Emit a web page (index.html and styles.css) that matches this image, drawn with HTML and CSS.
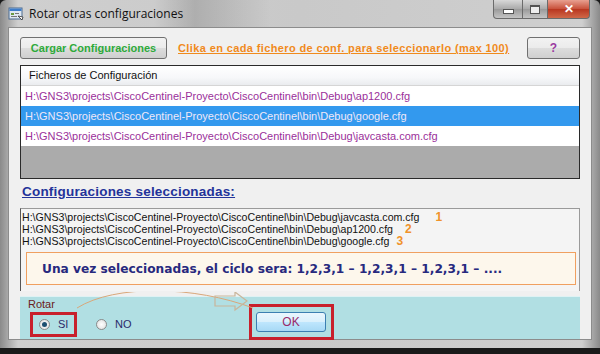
FILE: index.html
```html
<!DOCTYPE html>
<html>
<head>
  <title>Rotar otras configuraciones</title>
  <link rel="stylesheet" href="styles.css">
</head>
<body>
  <div class="window">
    <div class="titlebar">
      <svg class="app-icon" width="16" height="16" viewBox="0 0 16 16">
        <rect x="1" y="2" width="13" height="11" fill="#dfe8f2" stroke="#4a6a90"/>
        <rect x="1.5" y="2.5" width="12" height="2.5" fill="#3d7cc9"/>
        <rect x="3" y="7" width="3" height="2" fill="#6a9a40"/>
        <rect x="7" y="7" width="4" height="1" fill="#777"/>
        <rect x="3" y="10" width="6" height="1" fill="#777"/>
        <path d="M10 10 l4 4 l1 -3 z" fill="#fff" stroke="#333" stroke-width="0.8"/>
      </svg>
      <span class="title">Rotar otras configuraciones</span>
      <div class="controls">
        <span class="ctl min"><i></i></span>
        <span class="ctl max"><i></i></span>
        <span class="ctl close">&#x2715;</span>
      </div>
    </div>

    <div class="client">
      <div class="toolbar">
        <button class="btn load">Cargar Configuraciones</button>
        <a class="hint">Clika en cada fichero de conf. para seleccionarlo (max 100)</a>
        <button class="btn help">?</button>
      </div>

      <div class="listview">
        <div class="lv-head">Ficheros de Configuración</div>
        <div class="lv-row">H:\GNS3\projects\CiscoCentinel-Proyecto\CiscoCentinel\bin\Debug\ap1200.cfg</div>
        <div class="lv-row selected">H:\GNS3\projects\CiscoCentinel-Proyecto\CiscoCentinel\bin\Debug\google.cfg</div>
        <div class="lv-row">H:\GNS3\projects\CiscoCentinel-Proyecto\CiscoCentinel\bin\Debug\javcasta.com.cfg</div>
        <div class="lv-empty"></div>
      </div>

      <h3 class="section">Configuraciones seleccionadas:</h3>

      <div class="picked">
        <div class="picked-row">H:\GNS3\projects\CiscoCentinel-Proyecto\CiscoCentinel\bin\Debug\javcasta.com.cfg<b class="n n1">1</b></div>
        <div class="picked-row">H:\GNS3\projects\CiscoCentinel-Proyecto\CiscoCentinel\bin\Debug\ap1200.cfg<b class="n n2">2</b></div>
        <div class="picked-row">H:\GNS3\projects\CiscoCentinel-Proyecto\CiscoCentinel\bin\Debug\google.cfg<b class="n n3">3</b></div>
        <div class="note">Una vez seleccionadas, el ciclo sera: 1,2,3,1 &ndash; 1,2,3,1 &ndash; 1,2,3,1 &ndash; ....</div>
      </div>

      <div class="rotate">
        <span class="rotate-label">Rotar</span>
        <div class="rotate-row">
          <label class="radio boxed"><span class="dot on"></span>SI</label>
          <label class="radio"><span class="dot"></span>NO</label>
          <div class="ok-box"><button class="btn ok">OK</button></div>
        </div>
        <svg class="arrow" width="200" height="30" viewBox="0 0 200 30">
          <path d="M2 16 C40 -8 120 -6 178 16" fill="none" stroke="#d9a77a" stroke-width="1"/>
          <path d="M140 4 h20 v-4 l12 9 l-12 9 v-4 h-20 z" fill="none" stroke="#c9b59a" stroke-width="1.2"/>
        </svg>
      </div>
    </div>
  </div>
</body>
</html>
```

FILE: styles.css
```css
body { margin: 0; width: 600px; height: 354px; overflow: hidden; background: #1a1a1a; font-family: "Liberation Sans", Arial, sans-serif; }

.window { width: 600px; height: 348px; background: linear-gradient(90deg, #8a8a8a, #cfcfcf 3%, #c9c9c9 50%, #cfcfcf 97%, #8a8a8a); border-radius: 6px 6px 0 0; padding: 0 8px 8px; box-sizing: border-box; display: flex; flex-direction: column; }

.titlebar { height: 28px; display: flex; align-items: center; position: relative; background: linear-gradient(90deg, transparent 25%, rgba(120,120,120,0.35) 32%, transparent 45%); }
.app-icon { margin-right: 5px; }
.title { font-family: "Open Sans", "Noto Sans", sans-serif; font-size: 12px; color: #111; }
.controls { position: absolute; right: 2px; top: 0; display: flex; }
.ctl { height: 19px; display: flex; align-items: center; justify-content: center; border: 1px solid #6b6b6b; border-top: none; box-sizing: border-box; background: linear-gradient(#d8d8d8, #a9a9a9 50%, #9a9a9a 51%, #c4c4c4); }
.ctl.min { width: 30px; border-radius: 0 0 0 4px; }
.ctl.min i { width: 9px; height: 3px; background: #fff; border: 1px solid #555; margin-top: 5px; }
.ctl.max { width: 25px; border-left: none; }
.ctl.max i { width: 8px; height: 6px; border: 1px solid #555; border-top-width: 2px; background: #eee; }
.ctl.close { width: 42px; border-left: none; border-radius: 0 0 4px 0; color: #fff; font-size: 12px; font-weight: bold; background: linear-gradient(#e8a090, #c8503a 50%, #b83620 51%, #d06848); }

.client { flex: 1; background: #f0f0f0; border: 1px solid #8c8c8c; padding: 0 11px; display: flex; flex-direction: column; }

.toolbar { margin-top: 9px; height: 22px; display: flex; align-items: center; }
.btn { height: 22px; border: 1px solid #707070; border-radius: 3px; background: linear-gradient(#f2f2f2, #ebebeb 50%, #dddddd 51%, #cfcfcf); font-family: "Liberation Sans", Arial, sans-serif; padding: 0; }
.btn.load { width: 147px; color: #2eaa3a; font-weight: bold; font-size: 11px; }
.hint { margin-left: 11px; color: #f08a1c; font-weight: bold; font-size: 11px; text-decoration: underline; letter-spacing: 0.38px; }
.btn.help { margin-left: auto; width: 53px; color: #9a3aa0; font-weight: bold; font-size: 12px; }

.listview { margin-top: 6px; height: 112px; border: 1px solid #2a2a2a; background: #ababab; display: flex; flex-direction: column; font-size: 11px; }
.lv-head { height: 19px; line-height: 19px; padding-left: 8px; background: linear-gradient(#ffffff, #f7f8fa 60%, #eaecef); border-bottom: 1px solid #d5d5d5; color: #111; }
.lv-row { height: 20px; line-height: 20px; padding-left: 4px; background: #fff; color: #9a2f9a; white-space: nowrap; }
.lv-row.selected { background: #3399ee; color: #f0e8f8; }
.lv-empty { flex: 1; }

.section { margin: 5px 0 0 2px; height: 18px; font-size: 13.5px; font-weight: bold; color: #23339a; text-decoration: underline; letter-spacing: 0.2px; }

.picked { margin-top: 6px; height: 80px; border: 1px solid #9a9a9a; border-left-color: #555; border-bottom: none; background: #f4f4f4; padding-top: 2px; font-size: 10.6px; color: #111; }
.picked-row { height: 12px; line-height: 12px; padding-left: 1px; white-space: nowrap; }
.n { color: #f0922a; font-size: 12px; }
.n1 { margin-left: 16px; }
.n2 { margin-left: 12px; }
.n3 { margin-left: 7px; }
.note { margin: 5px 3px 0 5px; height: 33px; box-sizing: border-box; border: 1px solid #f0a060; background: #fdf7ec; color: #27297e; font-family: "DejaVu Sans", Verdana, sans-serif; font-weight: bold; font-size: 12.2px; line-height: 33px; padding-left: 15px; white-space: nowrap; }

.rotate { margin-top: 5px; height: 42px; background: #b1dfe3; border-top: 1px solid #dff2f4; position: relative; }
.rotate-label { position: absolute; left: 8px; top: 1px; font-size: 11px; color: #6a2020; }
.rotate-row { display: flex; align-items: center; padding-top: 11px; padding-left: 10px; }
.radio { display: flex; align-items: center; font-size: 11px; color: #2a2a6a; height: 25px; box-sizing: border-box; }
.radio.boxed { border: 3px solid #c8202c; width: 47px; padding-left: 6px; }
.radio + .radio { margin-left: 19px; }
.dot { width: 11px; height: 11px; border-radius: 50%; border: 1px solid #8a8a8a; background: radial-gradient(#ffffff, #dcdcdc); box-sizing: border-box; margin-right: 8px; position: relative; }
.dot.on::after { content: ""; position: absolute; left: 2px; top: 2px; width: 5px; height: 5px; border-radius: 50%; background: #1d4f70; }
.ok-box { margin-left: 117px; margin-top: -4px; border: 3px solid #c8202c; width: 85px; height: 36px; box-sizing: border-box; display: flex; align-items: center; justify-content: center; }
.btn.ok { width: 70px; height: 20px; border-color: #3c7fb1; background: linear-gradient(#eaf6fd, #d9f0fc 50%, #bee6fd 51%, #a7d9f5); color: #9a2a6a; font-size: 12px; }
.arrow { position: absolute; left: 55px; top: -5px; }
```
